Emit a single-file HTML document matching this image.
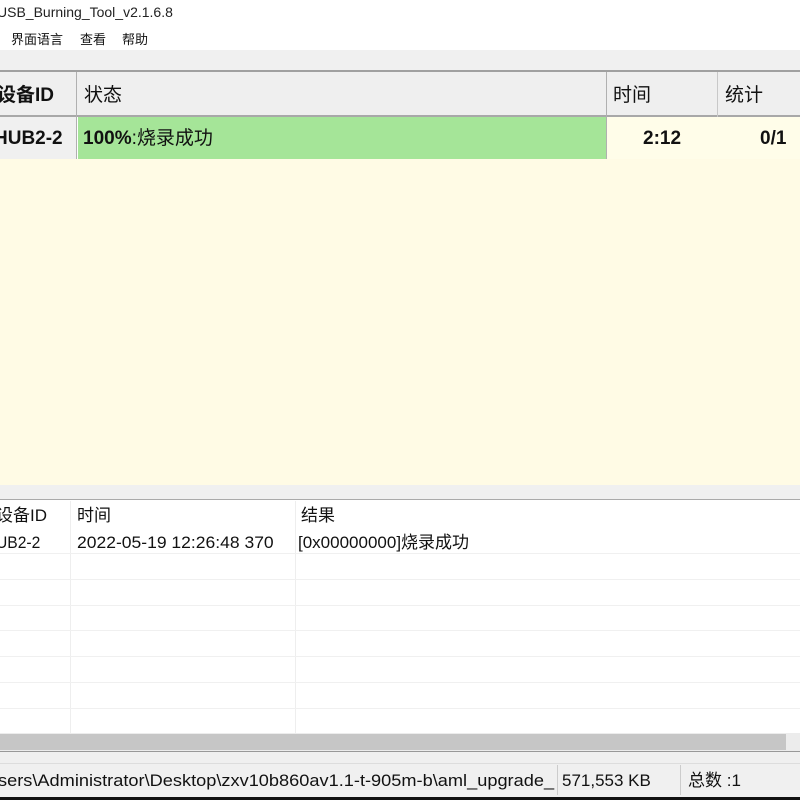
<!DOCTYPE html>
<html><head><meta charset="utf-8"><style>
*{margin:0;padding:0;box-sizing:border-box}
body{width:800px;height:800px;overflow:hidden;background:#fff;position:relative;font-family:"Liberation Sans","Noto Sans CJK SC",sans-serif;color:#111}
.a{position:absolute;white-space:nowrap;line-height:1}
.s{transform-origin:0 0}
</style></head><body>
<div class="a" style="left:-3px;top:5px;font-size:14px;color:#222">USB_Burning_Tool_v2.1.6.8</div>
<div class="a" style="left:11px;top:33px;font-size:13px">界面语言</div>
<div class="a" style="left:80px;top:33px;font-size:13px">查看</div>
<div class="a" style="left:122px;top:33px;font-size:13px">帮助</div>
<div class="a" style="left:0;top:50px;width:800px;height:20px;background:#f0f0f0"></div>
<div class="a" style="left:0;top:70px;width:800px;height:47px;background:#efefef;border-top:2px solid #a0a0a0;border-bottom:2px solid #a8a8a8"></div>
<div class="a" style="left:76px;top:72px;width:1px;height:88px;background:#b0b0b0"></div>
<div class="a" style="left:606px;top:72px;width:1px;height:88px;background:#b0b0b0"></div>
<div class="a" style="left:717px;top:72px;width:1px;height:88px;background:#c8c8c8"></div>
<div class="a" style="left:-3px;top:86px;font-size:19px;font-weight:bold">设备ID</div>
<div class="a" style="left:84px;top:86px;font-size:19px">状态</div>
<div class="a" style="left:613px;top:86px;font-size:19px">时间</div>
<div class="a" style="left:725px;top:86px;font-size:19px">统计</div>
<div class="a" style="left:0;top:117px;width:76px;height:42px;background:#f0f0f0"></div>
<div class="a" style="left:78px;top:117px;width:528px;height:42px;background:#a5e598"></div>
<div class="a" style="left:607px;top:117px;width:193px;height:42px;background:#fffde9"></div>
<div class="a" style="left:-6px;top:129px;font-size:19px;font-weight:bold">HUB2-2</div>
<div class="a" style="left:83px;top:129px;font-size:19px"><b>100%</b>:烧录成功</div>
<div class="a" style="left:643px;top:129px;font-size:19px;font-weight:bold">2:12</div>
<div class="a" style="left:760px;top:129px;font-size:19px;font-weight:bold">0/1</div>
<div class="a" style="left:0;top:159px;width:800px;height:326px;background:#fffbe5"></div>
<div class="a" style="left:0;top:485px;width:800px;height:15px;background:#f0f0f0;border-bottom:1px solid #aaa"></div>
<div class="a" style="left:70px;top:501px;width:1px;height:232px;background:#eee"></div>
<div class="a" style="left:295px;top:501px;width:1px;height:232px;background:#eee"></div>
<div class="a" style="left:-4px;top:507px;font-size:17px">设备ID</div>
<div class="a" style="left:77px;top:507px;font-size:17px">时间</div>
<div class="a" style="left:301px;top:507px;font-size:17px">结果</div>
<div class="a s" style="left:-4px;top:534px;font-size:17px;transform:scaleX(0.92)">UB2-2</div>
<div class="a s" style="left:77px;top:534px;font-size:17px;transform:scaleX(1.03)">2022-05-19 12:26:48 370</div>
<div class="a s" style="left:298px;top:534px;font-size:17px;transform:scaleX(1.0)">[0x00000000]烧录成功</div>
<div class="a" style="left:0;top:553px;width:800px;height:1px;background:#f0f0f0"></div>
<div class="a" style="left:0;top:579px;width:800px;height:1px;background:#f0f0f0"></div>
<div class="a" style="left:0;top:605px;width:800px;height:1px;background:#f0f0f0"></div>
<div class="a" style="left:0;top:630px;width:800px;height:1px;background:#f0f0f0"></div>
<div class="a" style="left:0;top:656px;width:800px;height:1px;background:#f0f0f0"></div>
<div class="a" style="left:0;top:682px;width:800px;height:1px;background:#f0f0f0"></div>
<div class="a" style="left:0;top:708px;width:800px;height:1px;background:#f0f0f0"></div>
<div class="a" style="left:0;top:733px;width:800px;height:18px;background:#ececec"></div>
<div class="a" style="left:0;top:734px;width:786px;height:16px;background:#c6c6c6"></div>
<div class="a" style="left:0;top:751px;width:800px;height:12px;background:#f0f0f0;border-top:1px solid #999"></div>
<div class="a" style="left:0;top:763px;width:800px;height:34px;background:#f0f0f0;border-top:1px solid #ddd"></div>
<div class="a" style="left:557px;top:765px;width:1px;height:30px;background:#ccc"></div>
<div class="a" style="left:680px;top:765px;width:1px;height:30px;background:#ccc"></div>
<div class="a s" style="left:-2px;top:772px;font-size:17px;transform:scaleX(1.07)">sers\Administrator\Desktop\zxv10b860av1.1-t-905m-b\aml_upgrade_</div>
<div class="a" style="left:562px;top:772px;font-size:17px">571,553 KB</div>
<div class="a" style="left:688px;top:772px;font-size:17px">总数 :1</div>
<div class="a" style="left:0;top:797px;width:800px;height:3px;background:#111"></div>
</body></html>
